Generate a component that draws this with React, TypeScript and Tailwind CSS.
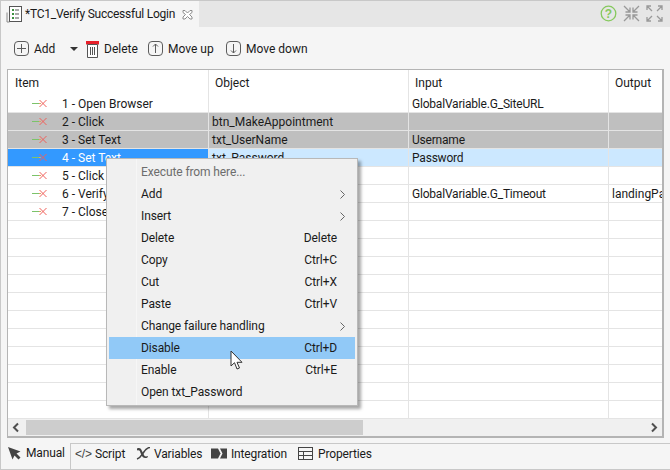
const rows = [
  { name: "1 - Open Browser", object: "", input: "GlobalVariable.G_SiteURL", output: "" },
  { name: "2 - Click", object: "btn_MakeAppointment", input: "", output: "", disabled: true },
  { name: "3 - Set Text", object: "txt_UserName", input: "Username", output: "", disabled: true },
  { name: "4 - Set Text", object: "txt_Password", input: "Password", output: "", selected: true },
  { name: "5 - Click", object: "", input: "", output: "" },
  { name: "6 - Verify Element Present", object: "", input: "GlobalVariable.G_Timeout", output: "landingPage" },
  { name: "7 - Close Browser", object: "", input: "", output: "" },
];

const menu = [
  { label: "Execute from here...", muted: true },
  { label: "Add", arrow: true },
  { label: "Insert", arrow: true },
  { label: "Delete", key: "Delete" },
  { label: "Copy", key: "Ctrl+C" },
  { label: "Cut", key: "Ctrl+X" },
  { label: "Paste", key: "Ctrl+V" },
  { label: "Change failure handling", arrow: true },
  { label: "Disable", key: "Ctrl+D", active: true },
  { label: "Enable", key: "Ctrl+E" },
  { label: "Open txt_Password" },
];

function StepIcon() {
  return (
    <svg width="15" height="9" viewBox="0 0 15 9" className="shrink-0">
      <path d="M0 4.5h8" stroke="#7cc36a" strokeWidth="1" />
      <path d="M7 4.5h2" stroke="#e0a060" strokeWidth="1" />
      <path d="M7.5 1l7 7M14.5 1l-7 7" stroke="#f0605a" strokeWidth="1" fill="none" />
    </svg>
  );
}

function RoundIcon({ d }: { d: string }) {
  return (
    <svg width="16" height="16" viewBox="0 0 16 16" className="shrink-0">
      <rect x="0.5" y="0.5" width="14" height="14" rx="3.5" fill="none" stroke="#5c5c5c" />
      <path d={d} fill="none" stroke="#5c5c5c" />
    </svg>
  );
}

function Row({ row }: { row?: (typeof rows)[number] }) {
  const bg = row?.selected ? "bg-[#cce8ff]" : row?.disabled ? "bg-[#bfbfbf]" : "";
  return (
    <div className={`flex h-[18px] border-b border-[#e4e4e4] text-[12px] leading-[19px] text-[#1a1a1a] ${bg}`}>
      <div
        className={`flex w-[201px] shrink-0 items-center border-r border-[#e4e4e4] pl-[24px] ${
          row?.selected ? "bg-[#3399ff] text-white" : ""
        }`}
      >
        {row && <StepIcon />}
        <span className="ml-[15px] mt-[2px] whitespace-nowrap">{row?.name}</span>
      </div>
      <div className="w-[200px] shrink-0 overflow-hidden whitespace-nowrap border-r border-[#e4e4e4] pl-[3px]">{row?.object}</div>
      <div className="w-[200px] shrink-0 overflow-hidden whitespace-nowrap border-r border-[#e4e4e4] pl-[3px] tracking-[-0.2px]">{row?.input}</div>
      <div className="min-w-0 flex-1 overflow-hidden whitespace-nowrap pl-[3px]">{row?.output}</div>
    </div>
  );
}

export default function App() {
  return (
    <div className="relative flex h-[470px] w-[670px] flex-col overflow-hidden border-t border-l border-b border-[#c8c8c8] bg-[#f5f5f5] font-['Roboto',sans-serif] text-[12px] text-[#1a1a1a]">
      {/* tab bar */}
      <div className="flex h-[26px] shrink-0 items-start justify-between bg-[#e6e6e6] pr-[7px]">
        <div className="flex h-[26px] w-[198px] items-center bg-[#f5f5f5] pl-[5px]">
          <svg width="17" height="17" viewBox="0 0 17 17" className="shrink-0">
            <rect x="3.500" y="0.500" width="12" height="15" fill="#fff" stroke="#555" />
            <path d="M6 4h2M6 8h2M6 12h2" stroke="#3d9140" strokeWidth="2" />
            <path d="M9 4h4M9 8h4M9 12h4" stroke="#555" />
            <path d="M1 6.500v9.500h2.500" fill="none" stroke="#8a8a8a" />
          </svg>
          <span className="ml-[2px] w-[149px] whitespace-nowrap tracking-[-0.25px]">*TC1_Verify Successful Login</span>
          <svg width="11" height="11" viewBox="0 0 11 11" className="ml-[8px] shrink-0">
            <path d="M1 1.500h2l2.500 2.500L8 1.500h2v2L7.500 5.500 10 8v2H8L5.500 7.500 3 10H1V8l2.500-2.500L1 3.500z" fill="#fff" stroke="#8c8c8c" />
          </svg>
        </div>
        <div className="flex items-center pt-[4px]">
          <svg width="17" height="17" viewBox="0 0 17 17" className="mr-[6px]">
            <circle cx="8.500" cy="8.500" r="7.300" fill="none" stroke="#86c95e" strokeWidth="1.300" />
            <text x="8.500" y="12.600" textAnchor="middle" fontSize="12" fontWeight="700" fill="#86c95e" fontFamily="'Liberation Sans',sans-serif">?</text>
          </svg>
          <svg width="17" height="17" viewBox="0 0 17 17" className="mr-[6px]" fill="none" stroke="#999" strokeWidth="1.300">
            <path d="M1 1l5.500 5.500M7 2.500V7H2.500M16 1l-5.500 5.500M10 2.500V7h4.500M1 16l5.500-5.500M7 14.500V10H2.500M16 16l-5.500-5.500M10 14.500V10h4.500" />
          </svg>
          <svg width="17" height="17" viewBox="0 0 17 17" fill="none" stroke="#999" strokeWidth="1.300">
            <path d="M6 6L1 1M1 5V1h4M11 6l5-5M12 1h4v4M6 11l-5 5M1 12v4h4M11 11l5 5M16 12v4h-4" />
          </svg>
        </div>
      </div>

      {/* toolbar */}
      <div className="flex h-[42px] shrink-0 items-center pl-[13px] pt-[2px] text-[12px]">
        <RoundIcon d="M3 7.500h9M7.500 3v9" />
        <span className="ml-[4px] w-[21px]">Add</span>
        <svg width="8" height="4" viewBox="0 0 8 4" className="ml-[15px]">
          <path d="M0 0h8L4 4z" fill="#333" />
        </svg>
        <svg width="13" height="17" viewBox="0 0 13 17" className="ml-[8px]">
          <rect x="0" y="0" width="13" height="3.500" fill="#e8202a" />
          <path d="M1.500 3.500h10v13h-10z" fill="#fff" stroke="#555" />
          <path d="M4.500 6v8M6.500 6v8M8.500 6v8" stroke="#555" />
        </svg>
        <span className="ml-[5px] w-[33px]">Delete</span>
        <span className="ml-[11px]"><RoundIcon d="M7.500 12V3M5 5.500l2.500-2.500L10 5.500" /></span>
        <span className="ml-[4px] w-[47px]">Move up</span>
        <span className="ml-[11px]"><RoundIcon d="M7.500 3v9M5 9.500l2.500 2.500L10 9.500" /></span>
        <span className="ml-[4px]">Move down</span>
      </div>

      {/* table */}
      <div className="ml-[6px] mr-[6px] flex h-[369px] shrink-0 flex-col border-[#b4b4b4] bg-white [border-width:1px_2px_2px_1px]">
        <div className="flex h-[25px] shrink-0 text-[12px]">
          <div className="w-[201px] shrink-0 border-r border-[#e4e4e4] pl-[7px] pt-[4px]">Item</div>
          <div className="w-[200px] shrink-0 border-r border-[#e4e4e4] pl-[6px] pt-[4px]">Object</div>
          <div className="w-[200px] shrink-0 border-r border-[#e4e4e4] pl-[6px] pt-[4px]">Input</div>
          <div className="flex-1 pl-[6px] pt-[4px]">Output</div>
        </div>
        <div className="min-h-0 flex-1 overflow-hidden">
          {rows.map((row) => (
            <Row key={row.name} row={row} />
          ))}
          {Array.from({ length: 11 }).map((_, i) => (
            <Row key={i} />
          ))}
        </div>
        <div className="flex h-[17px] shrink-0 items-center bg-[#f0f0f0]">
          <svg width="18" height="17" viewBox="0 0 18 17" className="shrink-0">
            <path d="M10 4.500L6 8.500l4 4" fill="none" stroke="#505050" strokeWidth="2" />
          </svg>
          <div className="h-[15px] w-[337px] shrink-0 bg-[#cdcdcd]" />
          <div className="h-[15px] flex-1" />
          <svg width="17" height="17" viewBox="0 0 17 17" className="shrink-0">
            <path d="M7 4.500l4 4-4 4" fill="none" stroke="#505050" strokeWidth="2" />
          </svg>
        </div>
      </div>

      {/* bottom tabs */}
      <div className="mt-[5px] flex h-[26px] shrink-0 items-center pl-[7px] text-[12px] tracking-[-0.15px]">
        <div className="flex h-[26px] w-[63px] items-center border-r border-[#c8c8c8] pb-[6px]">
          <svg width="13" height="13" viewBox="0 0 13 13" className="shrink-0">
            <path d="M0 0l12.500 4.500-4 2 4 4-2 2-4-4-2 4z" fill="#444" />
          </svg>
          <span className="ml-[5px]">Manual</span>
        </div>
        <div className="flex h-[26px] flex-1 items-center border-t border-[#c8c8c8] pl-[4px] pb-[6px]">
          <span className="w-[16px] whitespace-nowrap font-['Liberation_Sans',sans-serif] text-[#444]">&lt;/&gt;</span>
          <span className="ml-[4px] w-[30px]">Script</span>
          <svg width="15" height="13" viewBox="0 0 15 13" className="ml-[11px] shrink-0">
            <path d="M1 1.500c3-1 4 0 5 2.500l1.500 3c1 2.500 2 3 4.500 2l-.5 1.500c-3 1.500-5 0-6-2.500l-1-2C4 3.500 3 3 1 3.500z" fill="#444" />
            <path d="M14 .5c-3 0-4.500 2-6.500 5s-3 5.500-6.500 6.500" fill="none" stroke="#444" strokeWidth="1.600" />
          </svg>
          <span className="ml-[3px] w-[46px]">Variables</span>
          <svg width="16" height="11" viewBox="0 0 16 11" className="ml-[11px] shrink-0">
            <path d="M0 .5h7l2.500 5-2.500 5H0z" fill="#444" />
            <path d="M9 .5h7v10H9l2.500-5z" fill="#444" />
          </svg>
          <span className="ml-[4px] w-[57px]">Integration</span>
          <svg width="15" height="13" viewBox="0 0 15 13" className="ml-[10px] shrink-0" fill="none" stroke="#444">
            <rect x="0.500" y="0.500" width="14" height="12" />
            <path d="M0.500 4.500h14M0.500 8.500h14M5.500 4.500v8" />
          </svg>
          <span className="ml-[5px]">Properties</span>
        </div>
      </div>

      {/* context menu */}
      <div className="absolute left-[105px] top-[157px] w-[252px] border border-[#b8b8b8] bg-[#f0f0f0] px-[2px] py-[2px] shadow-[3px_3px_3px_rgba(0,0,0,0.35)]">
        <div className="absolute bottom-0 left-[29px] top-0 w-px bg-[#f6f6f6]" />
        {menu.map((item) => (
          <div
            key={item.label}
            className={`relative flex h-[22px] items-center pl-[32px] pr-[18px] text-[12px] tracking-[-0.1px] ${
              item.active ? "bg-[#91c9f7]" : ""
            } ${item.muted ? "text-[#6d6d6d]" : ""}`}
          >
            <span className="flex-1 whitespace-nowrap">{item.label}</span>
            {item.key && <span>{item.key}</span>}
            {item.arrow && (
              <svg width="5" height="9" viewBox="0 0 5 9" className="absolute right-[10px]">
                <path d="M.5.500l4 4-4 4" fill="none" stroke="#666" />
              </svg>
            )}
          </div>
        ))}
      </div>

      {/* mouse pointer */}
      <svg width="15" height="21" viewBox="0 0 15 21" className="absolute left-[229px] top-[349px]">
        <path d="M1 1v15l3.500-3.300L7 19l2.500-1-2.500-5.700h5z" fill="#fff" stroke="#333" />
      </svg>
    </div>
  );
}
